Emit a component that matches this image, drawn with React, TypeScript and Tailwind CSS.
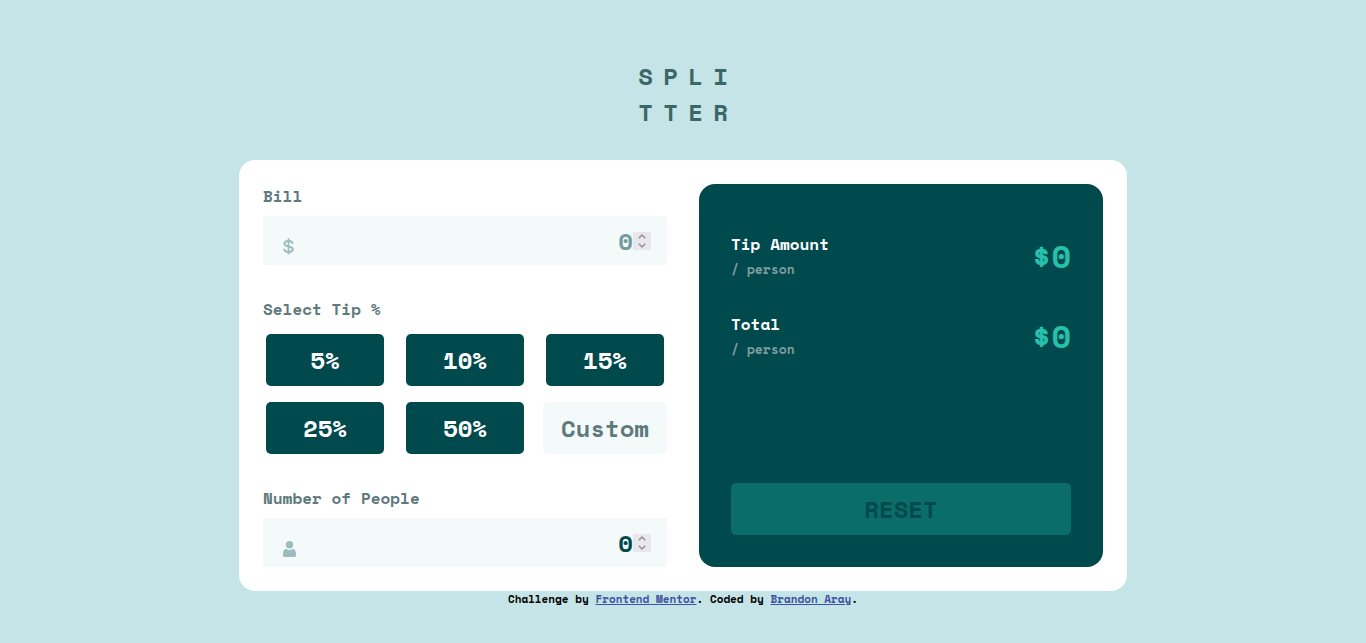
import { useState } from "react";
import type { ReactNode } from "react";

const TIPS = [5, 10, 15, 25, 50];

function DollarIcon() {
  return (
    <svg width="11" height="17" viewBox="0 0 11 17" fill="none" stroke="#9ebbbd" strokeWidth="2" aria-hidden="true">
      <path d="M5.500 0.300v16.200" strokeWidth="1.700" />
      <path d="M9.700 5.700C9.600 3.700 8 2.900 5.500 2.900S1.400 3.800 1.400 5.400C1.400 7.300 3 7.900 5.500 8.400S9.800 9.600 9.800 11.300 8.200 14 5.500 14 1.200 13.100 1.100 10.800" />
    </svg>
  );
}

function PersonIcon() {
  return (
    <svg width="13" height="16" viewBox="0 0 13 16" fill="#9ebbbd" aria-hidden="true">
      <circle cx="6.500" cy="3.700" r="3.700" />
      <path d="M3 7.700C4 8.600 5.200 9.100 6.500 9.100S9 8.600 10 7.700C12.100 8.200 13 10.300 13 12.500V14.300C13 15.400 12.400 16 11.400 16H1.600C.6 16 0 15.400 0 14.300V12.500C0 10.300.9 8.200 3 7.700Z" />
    </svg>
  );
}

type NumberFieldProps = {
  id: string;
  label: string;
  icon: ReactNode;
  value: string;
  onChange: (value: string) => void;
  placeholder?: string;
};

function NumberField({ id, label, icon, value, onChange, placeholder }: NumberFieldProps) {
  const step = (delta: number) => onChange(String(Math.max(0, Number(value) + delta)));
  return (
    <div>
      <label htmlFor={id} className="mb-2 block text-base leading-6 text-[#5e7a7d]">
        {label}
      </label>
      <div className="flex h-[49px] items-center bg-[#f4fafa] pr-4 pl-5">
        <span className="mt-3">{icon}</span>
        <input
          id={id}
          type="number"
          min="0"
          value={value}
          placeholder={placeholder}
          onChange={(e) => onChange(e.target.value)}
          className="min-w-0 flex-1 appearance-none bg-transparent text-right text-2xl text-[#00494d] outline-none [-moz-appearance:textfield] placeholder:text-[#739c9f] [&::-webkit-inner-spin-button]:appearance-none"
        />
        <span className="flex w-[18px] flex-col bg-[#e9e7ec]">
          <button type="button" aria-label={`Increase ${label}`} onClick={() => step(1)} className="flex h-[9px] items-center justify-center">
            <svg width="8" height="5" viewBox="0 0 8 5" fill="none" stroke="#8f8f9d" strokeWidth="1.4">
              <path d="M.8 4.200 4 1l3.200 3.200" />
            </svg>
          </button>
          <button type="button" aria-label={`Decrease ${label}`} onClick={() => step(-1)} className="flex h-[9px] items-center justify-center">
            <svg width="8" height="5" viewBox="0 0 8 5" fill="none" stroke="#8f8f9d" strokeWidth="1.4">
              <path d="M.8.8 4 4 7.200.8" />
            </svg>
          </button>
        </span>
      </div>
    </div>
  );
}

function ResultRow({ title, amount }: { title: string; amount: string }) {
  return (
    <div className="flex items-start justify-between">
      <div>
        <p className="text-base leading-[25px] text-white">{title}</p>
        <p className="text-[13px] leading-[25px] text-[#7f9c9f]">/ person</p>
      </div>
      <output className="text-[32px] leading-12 text-[#26c0ab]">{amount}</output>
    </div>
  );
}

export default function App() {
  const [bill, setBill] = useState("");
  const [people, setPeople] = useState("0");
  const [custom, setCustom] = useState("");
  const [tip, setTip] = useState(0);

  const heads = Number(people);
  const rate = custom ? Number(custom) : tip;
  const tipEach = heads > 0 ? (Number(bill) * rate) / 100 / heads : 0;
  const totalEach = heads > 0 ? Number(bill) / heads + tipEach : 0;
  const money = (n: number) => "$" + (n ? n.toFixed(2) : "0");
  const untouched = !bill && heads === 0 && !rate;

  const reset = () => {
    setBill("");
    setPeople("0");
    setCustom("");
    setTip(0);
  };

  return (
    <div className="min-h-screen bg-[#c5e4e7] font-['Space_Mono','Liberation_Mono',monospace] font-bold">
      <header className="flex justify-center pt-[58px] pb-[30px]">
        <h1 aria-label="Splitter" className="grid grid-cols-4 text-center text-2xl leading-9 text-[#3d6666]">
          {"SPLITTER".split("").map((letter, i) => (
            <span key={i} className="w-[25px]">
              {letter}
            </span>
          ))}
        </h1>
      </header>

      <main className="mx-auto grid max-w-[888px] gap-8 rounded-2xl bg-white p-6 md:grid-cols-2">
        <form className="flex flex-col gap-8" onSubmit={(e) => e.preventDefault()}>
          <NumberField id="bill" label="Bill" icon={<DollarIcon />} value={bill} onChange={setBill} placeholder="0" />

          <fieldset>
            <legend className="mb-[13px] text-base leading-6 text-[#5e7a7d]">Select Tip %</legend>
            <div className="grid grid-cols-3 gap-4">
              {TIPS.map((t) => (
                <button
                  key={t}
                  type="button"
                  onClick={() => {
                    setTip(t);
                    setCustom("");
                  }}
                  className="mx-[3px] h-13 rounded-[5px] bg-[#00494d] text-2xl text-white"
                >
                  {t}%
                </button>
              ))}
              <input
                type="text"
                inputMode="numeric"
                aria-label="Custom tip"
                placeholder="Custom"
                value={custom}
                onChange={(e) => setCustom(e.target.value.replace(/\D/g, ""))}
                className="h-13 w-full min-w-0 rounded-[5px] bg-[#f4fafa] text-center text-2xl text-[#00494d] outline-none placeholder:text-[#5e7a7d]"
              />
            </div>
          </fieldset>

          <NumberField id="people" label="Number of People" icon={<PersonIcon />} value={people} onChange={setPeople} />
        </form>

        <section className="flex flex-col gap-[30px] rounded-2xl bg-[#00494d] px-8 pt-12 pb-8">
          <ResultRow title="Tip Amount" amount={money(tipEach)} />
          <ResultRow title="Total" amount={money(totalEach)} />
          <button
            type="button"
            disabled={untouched}
            onClick={reset}
            className="mt-auto h-13 rounded-[5px] bg-[#26c0ab] text-2xl text-[#00494d] disabled:bg-[#0b6d69]"
          >
            RESET
          </button>
        </section>
      </main>

      <footer className="text-center text-[11px] leading-4 text-black">
        Challenge by{" "}
        <a href="https://www.frontendmentor.io" className="text-[#3e52a3] underline">
          Frontend Mentor
        </a>
        . Coded by{" "}
        <a href="#" className="text-[#3e52a3] underline">
          Brandon Aray
        </a>
        .
      </footer>
    </div>
  );
}
